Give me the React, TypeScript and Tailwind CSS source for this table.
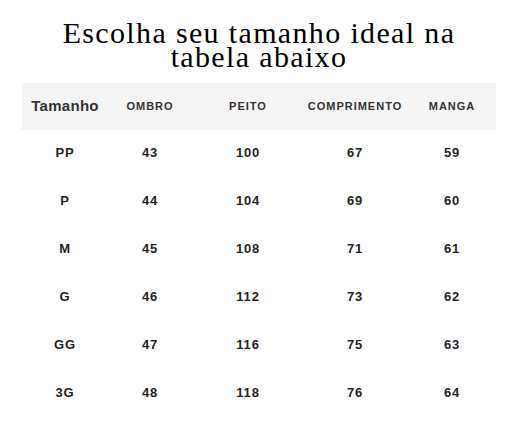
const headers = ["OMBRO", "PEITO", "COMPRIMENTO", "MANGA"];

const rows = [
  ["PP", "43", "100", "67", "59"],
  ["P", "44", "104", "69", "60"],
  ["M", "45", "108", "71", "61"],
  ["G", "46", "112", "73", "62"],
  ["GG", "47", "116", "75", "63"],
  ["3G", "48", "118", "76", "64"],
];

const cols = "grid grid-cols-[86px_84px_112px_102px_92px]";

const App = () => {
  return (
    <main className="h-[433px] w-[518px] bg-white pt-[21px]">
      <h1 className="text-center font-['Liberation_Serif',serif] text-[30px] leading-[24px] tracking-[0.045em] text-black">
        Escolha seu tamanho ideal na
        <br />
        tabela abaixo
      </h1>

      <div className="mx-[22px] mt-[14px]">
        {/* header band */}
        <div className={`${cols} h-[47px] items-center bg-[#f5f5f5] font-['Liberation_Sans',sans-serif]`}>
          <span className="text-center text-[15px] font-bold tracking-[0.02em] text-[#333]">Tamanho</span>
          {headers.map((h) => (
            <span key={h} className="text-center text-[11px] font-bold tracking-[0.09em] text-[#333]">
              {h}
            </span>
          ))}
        </div>

        {/* body rows */}
        <div className="font-['Liberation_Sans',sans-serif]">
          {rows.map((r) => (
            <div key={r[0]} className={`${cols} h-[48px] items-center pb-[3px] text-[13px] font-bold text-[#1f1f1f]`}>
              {r.map((c, i) => (
                <span key={i} className="text-center tracking-[0.06em]">
                  {c}
                </span>
              ))}
            </div>
          ))}
        </div>
      </div>
    </main>
  );
};

export default App;
